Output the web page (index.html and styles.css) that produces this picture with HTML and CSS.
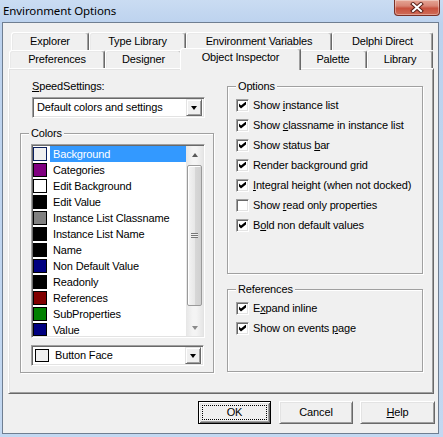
FILE: index.html
```html
<!DOCTYPE html>
<html>
<head>
<meta charset="utf-8">
<title>Environment Options</title>
<link rel="stylesheet" href="styles.css">
</head>
<body>
<div class="window">
  <div class="titlebar">
    <span class="title">Environment Options</span>
    <div class="close">
      <svg width="14" height="11" viewBox="0 0 14 11">
        <path d="M3 2 L11 9 M11 2 L3 9" stroke="#5a2018" stroke-width="4" stroke-linecap="square"/>
        <path d="M3 2 L11 9 M11 2 L3 9" stroke="#ffffff" stroke-width="2" stroke-linecap="square"/>
      </svg>
    </div>
  </div>
  <div class="client">
    <div class="tabctl">
      <div class="tabrow row1">
        <div class="tab t-explorer">Explorer</div>
        <div class="tab t-typelib">Type Library</div>
        <div class="tab t-envvars">Environment Variables</div>
        <div class="tab t-delphi">Delphi Direct</div>
      </div>
      <div class="tabrow row2">
        <div class="tab t-prefs">Preferences</div>
        <div class="tab t-designer">Designer</div>
        <div class="tab t-oi sel">Object Inspector</div>
        <div class="tab t-palette">Palette</div>
        <div class="tab t-library">Library</div>
      </div>
      <div class="page">
        <div class="col-left">
          <div class="speedlabel"><u>S</u>peedSettings:</div>
          <div class="combo speed">
            <span class="combo-text">Default colors and settings</span>
            <span class="drop"><span class="tri"></span></span>
          </div>
          <div class="group colors">
            <div class="legend">Colors</div>
            <div class="listbox">
              <div class="items">
                <div class="item selected"><span class="sw sw-bg"></span><span class="txt">Background</span></div>
                <div class="item"><span class="sw sw-purple"></span><span class="txt">Categories</span></div>
                <div class="item"><span class="sw sw-white"></span><span class="txt">Edit Background</span></div>
                <div class="item"><span class="sw sw-black"></span><span class="txt">Edit Value</span></div>
                <div class="item"><span class="sw sw-gray"></span><span class="txt">Instance List Classname</span></div>
                <div class="item"><span class="sw sw-black"></span><span class="txt">Instance List Name</span></div>
                <div class="item"><span class="sw sw-black"></span><span class="txt">Name</span></div>
                <div class="item"><span class="sw sw-navy"></span><span class="txt">Non Default Value</span></div>
                <div class="item"><span class="sw sw-black"></span><span class="txt">Readonly</span></div>
                <div class="item"><span class="sw sw-maroon"></span><span class="txt">References</span></div>
                <div class="item"><span class="sw sw-green"></span><span class="txt">SubProperties</span></div>
                <div class="item last"><span class="sw sw-navy"></span><span class="txt">Value</span></div>
              </div>
              <div class="vscroll">
                <div class="sb-btn"><span class="arrow-up"></span></div>
                <div class="sb-track">
                  <div class="thumb"><span class="grip"></span></div>
                </div>
                <div class="sb-btn"><span class="arrow-down"></span></div>
              </div>
            </div>
            <div class="combo face">
              <span class="sw sw-face"></span>
              <span class="combo-text">Button Face</span>
              <span class="drop"><span class="tri"></span></span>
            </div>
          </div>
        </div>
        <div class="col-right">
          <div class="group options">
            <div class="legend">Options</div>
            <div class="check"><span class="box on"></span><span>Show <u>i</u>nstance list</span></div>
            <div class="check"><span class="box on"></span><span>Show <u>c</u>lassname in instance list</span></div>
            <div class="check"><span class="box on"></span><span>Show status <u>b</u>ar</span></div>
            <div class="check"><span class="box on"></span><span>Render background <u>g</u>rid</span></div>
            <div class="check"><span class="box on"></span><span><u>I</u>ntegral height (when not docked)</span></div>
            <div class="check"><span class="box"></span><span>Show <u>r</u>ead only properties</span></div>
            <div class="check"><span class="box on"></span><span>B<u>o</u>ld non default values</span></div>
          </div>
          <div class="group refs">
            <div class="legend">References</div>
            <div class="check"><span class="box on"></span><span>E<u>x</u>pand inline</span></div>
            <div class="check"><span class="box on"></span><span>Show on events <u>p</u>age</span></div>
          </div>
        </div>
      </div>
    </div>
    <div class="buttons">
      <div class="btn default"><span class="focus">OK</span></div>
      <div class="btn cancel">Cancel</div>
      <div class="btn help"><span><u>H</u>elp</span></div>
    </div>
  </div>
</div>
</body>
</html>
```

FILE: styles.css
```css
* { box-sizing: border-box; }
html, body { margin: 0; padding: 0; }
body {
  width: 443px; height: 437px; overflow: hidden;
  background: #c0d5ef;
  font-family: "Liberation Sans", Arial, sans-serif;
  font-size: 11px; color: #000;
  letter-spacing: -0.15px;
}
u { text-decoration: underline; text-underline-offset: 1px; }

.window {
  width: 443px; height: 437px;
  display: flex; flex-direction: column;
  background: linear-gradient(to bottom, #cadcf2 0px, #bcd2ee 24px, #c3d8f1 100%);
}
.titlebar {
  height: 22px; flex: none;
  display: flex; justify-content: space-between; align-items: flex-start;
  padding: 0 3px 0 3px;
}
.title {
  font-family: "Noto Sans", "Open Sans", sans-serif;
  font-size: 11.5px; line-height: 21px; letter-spacing: -0.1px;
}
.close {
  width: 46px; height: 16px;
  border: 1px solid #7a3026; border-top: none;
  border-radius: 0 0 4px 4px;
  background: linear-gradient(to bottom, #e5a595 0%, #d88474 40%, #c8513e 55%, #cf6c58 100%);
  display: flex; align-items: center; justify-content: center;
  box-shadow: inset 0 0 0 1px rgba(255,255,255,0.35);
}
.close svg { display: block; }

.client {
  flex: 1;
  margin: 0 4px 3px 2px;
  border: 1px solid #6f7e91;
  background: #f0f0f0;
  display: flex; flex-direction: column;
  padding-top: 9px;
}
.tabctl { margin: 0 4px 0 5px; display: flex; flex-direction: column; }

.tabrow { display: flex; height: 18px; }
.row1 { padding-left: 3px; }
.row2 { padding-left: 1px; }
.tab {
  height: 18px;
  border: 1px solid #fff; border-right-color: #696969; border-bottom: none;
  border-radius: 3px 3px 0 0;
  box-shadow: inset -1px 0 #a0a0a0, inset 1px 1px #e9e9e9;
  background: #f0f0f0;
  text-align: center; line-height: 17px; white-space: nowrap;
}
.t-explorer { width: 78px; }
.t-typelib { width: 97px; }
.t-envvars { width: 146px; }
.t-delphi { width: 101px; }
.t-prefs { width: 96px; }
.t-designer { width: 77px; }
.t-oi { width: 117px; }
.t-palette { width: 68px; }
.t-library { width: 66px; }
.tab.sel {
  width: 121px; height: 22px;
  margin: -2px -2px -2px -2px;
  position: relative; z-index: 1;
  line-height: 16px;
  box-shadow: inset -1px 0 #a0a0a0;
}

.page {
  height: 326px;
  border: 1px solid; border-color: #fff #696969 #696969 #fff;
  box-shadow: inset 1px 1px #e3e3e3, inset -1px -1px #a0a0a0;
  display: flex;
  padding: 1px 0 0 11px;
}
.col-left { width: 194px; display: flex; flex-direction: column; }
.col-right { width: 196px; margin-left: 13px; display: flex; flex-direction: column; }

.speedlabel { margin-top: 10px; padding-left: 12px; line-height: 13px; }

.combo {
  height: 21px; background: #fff;
  border: 1px solid; border-color: #a0a0a0 #fff #fff #a0a0a0;
  box-shadow: inset 1px 1px #696969, inset -1px -1px #e3e3e3;
  display: flex; align-items: center;
  padding: 2px;
}
.combo.speed { width: 173px; margin: 4px 0 0 12px; }
.combo.face { width: 173px; margin: 7px 0 0 10px; }
.combo-text { flex: 1; padding-left: 2px; line-height: 15px; white-space: nowrap; overflow: hidden; }
.combo.face .combo-text { padding-left: 6px; }
.drop {
  width: 16px; height: 17px; flex: none;
  border: 1px solid; border-color: #e3e3e3 #696969 #696969 #e3e3e3;
  box-shadow: inset 1px 1px #fff, inset -1px -1px #a0a0a0;
  background: #f0f0f0;
  display: flex; align-items: center; justify-content: center;
}
.tri {
  width: 0; height: 0;
  border-left: 3.5px solid transparent; border-right: 3.5px solid transparent;
  border-top: 4px solid #000;
  margin-top: 1px;
}

.group {
  border: 1px solid #a0a0a0;
  box-shadow: inset 1px 1px #fff, 1px 1px #fff;
  display: flex; flex-direction: column; align-items: flex-start;
}
.legend {
  margin: -7px 0 0 8px; padding: 0 2px;
  line-height: 13px; background: #f0f0f0;
}
.group.colors { margin-top: 15px; height: 240px; }
.group.options { margin-top: 16px; height: 188px; }
.group.refs { margin-top: 15px; height: 83px; }

.listbox {
  width: 174px; height: 194px;
  margin: 4px 0 0 10px;
  background: #fff;
  border: 1px solid; border-color: #a0a0a0 #fff #fff #a0a0a0;
  box-shadow: inset 1px 1px #696969, inset -1px -1px #e3e3e3;
  padding: 1px;
  display: flex;
}
.items { flex: 1; overflow: hidden; }
.item { height: 16px; display: flex; align-items: flex-start; }
.item.last { height: 14px; }
.item.last .txt { line-height: 14px; padding-top: 1px; }
.sw {
  width: 14px; height: 14px; flex: none;
  border: 1px solid #000; margin-top: 1px;
}
.item.last .sw { height: 13px; }
.item .txt { flex: 1; margin-left: 3px; padding-left: 3px; line-height: 16px; white-space: nowrap; }
.item.selected .txt { background: #3399ff; color: #fff; }
.item.selected .sw { border-color: #0a1f5e; }
.sw-bg { background: #f0f0f0; }
.sw-purple { background: #800080; }
.sw-white { background: #fff; }
.sw-black { background: #000; }
.sw-gray { background: #808080; }
.sw-navy { background: #000080; }
.sw-maroon { background: #800000; }
.sw-green { background: #008000; }
.sw-face { background: #f0f0f0; width: 14px; height: 13px; margin: 0 0 0 1px; }

.vscroll {
  width: 17px; flex: none;
  display: flex; flex-direction: column;
  background: linear-gradient(to right, #e6e6e6, #f4f4f4 40%, #f4f4f4 60%, #e6e6e6);
}
.sb-btn { height: 17px; flex: none; display: flex; align-items: center; justify-content: center; }
.arrow-up {
  width: 0; height: 0;
  border-left: 3.5px solid transparent; border-right: 3.5px solid transparent;
  border-bottom: 4px solid #5a5a5a;
}
.arrow-down {
  width: 0; height: 0;
  border-left: 3.5px solid transparent; border-right: 3.5px solid transparent;
  border-top: 4px solid #8a8a8a;
}
.sb-track { flex: 1; padding: 2px 1px 0 1px; }
.thumb {
  height: 141px;
  border: 1px solid #9a9a9a; border-radius: 2px;
  background: linear-gradient(to right, #f4f4f4, #e8e8e8 50%, #d8d8d8 51%, #d0d0d0);
  box-shadow: inset 1px 1px #fff;
  display: flex; align-items: center; justify-content: center;
}
.grip {
  width: 7px; height: 5px;
  border-top: 1px solid #777; border-bottom: 1px solid #777;
  background: linear-gradient(#f0f0f0 0, #f0f0f0 1px, #777 1px, #777 2px, #f0f0f0 2px);
}

.check { display: flex; align-items: center; height: 20px; margin-left: 8px; white-space: nowrap; }
.legend + .check { margin-top: 2px; }
.box {
  width: 13px; height: 13px; flex: none; margin-right: 4px;
  background: #fff;
  border: 1px solid; border-color: #a0a0a0 #fff #fff #a0a0a0;
  box-shadow: inset 1px 1px #696969, inset -1px -1px #e3e3e3;
  position: relative;
}
.box.on::after {
  content: "";
  position: absolute; left: 2px; top: 2px; width: 7px; height: 7px;
  background: #000;
  clip-path: polygon(0% 28.5%, 28.5% 57%, 100% 0%, 100% 43%, 28.5% 100%, 0% 71.5%);
}

.buttons {
  display: flex; justify-content: flex-end;
  margin-top: 7px; padding-right: 3px;
}
.btn {
  height: 23px;
  border: 1px solid; border-color: #fff #696969 #696969 #fff;
  box-shadow: inset 1px 1px #e3e3e3, inset -1px -1px #a0a0a0;
  background: #f0f0f0;
  display: flex; align-items: center; justify-content: center;
  line-height: 13px;
}
.btn.default {
  width: 73px;
  border: 1px solid #000;
  box-shadow: inset 1px 1px #fff, inset -1px -1px #696969, inset 2px 2px #e3e3e3, inset -2px -2px #a0a0a0;
  padding: 3px;
}
.btn.default .focus {
  flex: 1; align-self: stretch;
  border: 1px dotted #000;
  display: flex; align-items: center; justify-content: center;
}
.btn.cancel { width: 74px; margin-left: 8px; }
.btn.help { width: 75px; margin-left: 7px; }
```
